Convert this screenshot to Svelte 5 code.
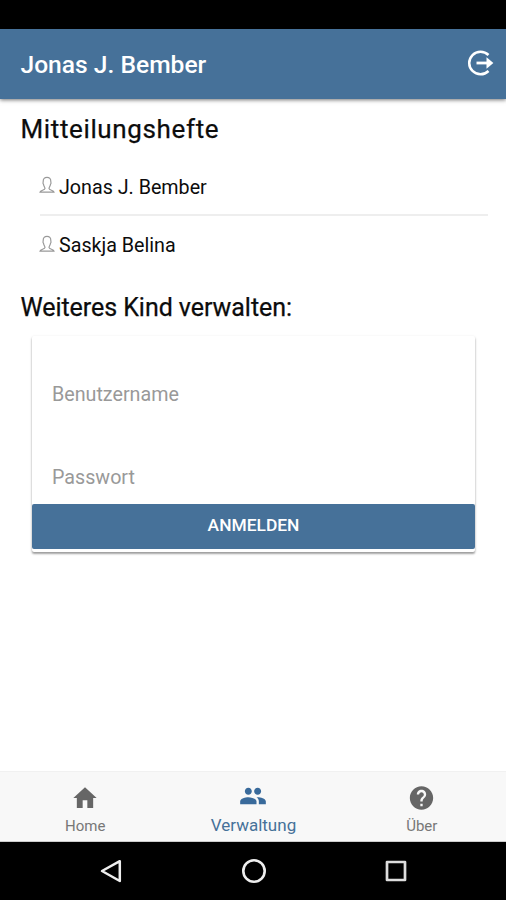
<script>
  const children = ['Jonas J. Bember', 'Saskja Belina'];
  let username = $state('');
  let password = $state('');
</script>

<div class="screen">
  <div class="status"></div>
  <header>
    <h1>Jonas J. Bember</h1>
    <button class="logout" aria-label="Abmelden">
      <svg width="28" height="28" viewBox="0 0 28 28" fill="none" stroke="#fff" stroke-width="2.5">
        <path d="M21.500 6A11.300 11.300 0 1 0 21.500 22" />
        <path d="M9.500 14H23" stroke-width="2.800" />
        <path d="M19.500 8.300L26.400 14L19.500 19.700Z" fill="#fff" stroke="none" />
      </svg>
    </button>
  </header>

  <main>
    <h2 class="books">Mitteilungshefte</h2>
    <ul>
      {#each children as name}
        <li>
          <svg width="16" height="18" viewBox="0 0 16 18" fill="none" stroke="#999" stroke-width="1.2">
            <path d="M1 16.200C1.400 14.200 5.800 14.400 6 12.500C6 11.200 4.600 10.200 4.500 8.300C3.600 7.400 4.100 6.600 4.200 5.500C4.100 2.800 5.600 1.400 8 1.400S11.900 2.800 11.800 5.500C11.900 6.600 12.400 7.400 11.500 8.300C11.400 10.200 10 11.200 10 12.500C10.200 14.400 14.600 14.200 15 16.200Z" />
          </svg>
          <span>{name}</span>
        </li>
      {/each}
    </ul>
    <h2 class="add">Weiteres Kind verwalten:</h2>
    <form onsubmit={(e) => e.preventDefault()}>
      <input type="text" placeholder="Benutzername" bind:value={username} />
      <input type="password" placeholder="Passwort" bind:value={password} />
      <button class="login"><span>ANMELDEN</span></button>
    </form>
  </main>

  <nav class="tabs">
    <a href="#home">
      <svg width="28" height="28" viewBox="0 0 24 24" fill="#666"><path d="M10 20.500v-6.500h4v6.500h5V12h3L12 2.700 2 12h3v8.500z" /></svg>
      <span>Home</span>
    </a>
    <a href="#verwaltung" class="active">
      <svg width="28" height="28" viewBox="0 0 24 24" fill="#396a9b"><path d="M16 11c1.660 0 2.990-1.340 2.990-3S17.660 5 16 5s-3 1.340-3 3 1.340 3 3 3zm-8 0c1.660 0 2.990-1.340 2.990-3S9.660 5 8 5 5 6.340 5 8s1.340 3 3 3zm0 2c-2.330 0-7 1.170-7 3.500V19h14v-2.500C15 14.170 10.330 13 8 13zm8 0c-.29 0-.62.02-.97.05C16.190 13.890 17 15.020 17 16.500V19h6v-2.500c0-2.330-4.670-3.500-7-3.500z" /></svg>
      <span>Verwaltung</span>
    </a>
    <a href="#ueber">
      <svg width="29" height="29" viewBox="0 0 24 24" fill="#666"><path d="M12 2C6.480 2 2 6.480 2 12s4.480 10 10 10 10-4.480 10-10S17.520 2 12 2zm1 17h-2v-2h2v2zm2.070-7.750l-.9.920C13.450 12.900 13 13.500 13 15h-2v-.5c0-1.100.45-2.100 1.170-2.830l1.240-1.260c.37-.36.590-.86.590-1.410 0-1.100-.9-2-2-2s-2 .9-2 2H8c0-2.210 1.790-4 4-4s4 1.790 4 4c0 .88-.36 1.680-.93 2.250z" /></svg>
      <span>Über</span>
    </a>
  </nav>

  <div class="system">
    <svg width="24" height="28" viewBox="0 0 24 28" fill="none" stroke="#eee" stroke-width="2.5" stroke-linejoin="round"><path d="M3 14L20.800 4.200V24Z" /></svg>
    <svg width="28" height="28" viewBox="0 0 28 28" fill="none" stroke="#eee" stroke-width="2.6"><circle cx="14" cy="14" r="10.700" /></svg>
    <svg width="24" height="28" viewBox="0 0 24 28" fill="none" stroke="#ddd" stroke-width="2.700" stroke-linejoin="round"><rect x="3" y="5" width="18" height="18" /></svg>
  </div>
</div>

<style>
  :global(body) { margin: 0; background: #fff; }
  .screen {
    width: 506px;
    height: 900px;
    display: flex;
    flex-direction: column;
    overflow: hidden;
    background: #fff;
    color: #0c0c0c;
    font-family: Roboto, sans-serif;
  }
  .screen * { box-sizing: border-box; }
  .status { height: 29px; background: #000; flex: none; }
  header {
    height: 70px;
    flex: none;
    display: flex;
    align-items: center;
    justify-content: space-between;
    padding: 0 11.500px 0 20.500px;
    background: #467199;
    box-shadow: 0 1px 4px rgba(0, 0, 0, .55);
  }
  h1, h2 { margin: 0; white-space: nowrap; }
  h1 { font-size: 24.6px; font-weight: 500; line-height: 30px; padding-top: 2px; color: #fff; }
  button { border: 0; padding: 0; font-family: inherit; }
  .logout { width: 28px; height: 28px; background: none; margin-top: -3px; }
  svg { display: block; flex: none; }
  main { flex: 1; padding: 14px 0 0; }
  h2 { font-size: 25px; font-weight: 400; line-height: 32px; padding-left: 20.500px; -webkit-text-stroke: .25px #0c0c0c; }
  .books { font-size: 26px; letter-spacing: .63px; }
  .add { margin-top: 18px; letter-spacing: -.05px; }
  ul { list-style: none; margin: 13px 18px 0 40px; padding: 0; }
  li { height: 58px; display: flex; align-items: center; gap: 4px; font-size: 19.7px; padding-top: 1px; }
  li svg { margin: -4px 0 0 -1px; }
  li:first-child { border-bottom: 2px solid #eee; padding-top: 2px; }
  form {
    margin: 12px 31px 0 32px;
    height: 216px;
    padding-top: 33px;
    padding-bottom: 3px;
    display: flex;
    flex-direction: column;
    border-radius: 2px;
    box-shadow: 0 2px 2px rgba(0, 0, 0, .3), 0 1px 3px rgba(0, 0, 0, .16);
  }
  input {
    height: 50px;
    margin: 0 20px 33px;
    padding: 0;
    border: 0;
    outline: 0;
    background: none;
    font: 19.7px Roboto, sans-serif;
  }
  input + input { margin-bottom: 2px; }
  input::placeholder { color: #999; opacity: 1; }
  .login {
    flex: 1;
    padding-bottom: 4px;
    background: #467199;
    color: #fff;
    border-radius: 2px;
    font-size: 17.4px;
    font-weight: 500;
  }
  .tabs {
    height: 71px;
    flex: none;
    display: flex;
    padding-left: 1px;
    background: #f8f8f8;
    border-top: 1px solid #f1f1f1;
    border-bottom: 1px solid #ccc;
  }
  .tabs a {
    flex: 1;
    display: flex;
    flex-direction: column;
    align-items: center;
    padding-top: 12px;
    color: #777;
    font-size: 15px;
    line-height: 20px;
    text-decoration: none;
  }
  .tabs a svg { height: 28px; }
  .tabs a span { margin-top: 4px; }
  .tabs .active { color: #467199; font-size: 17px; padding-top: 10px; }
  .tabs .active span { margin-top: 5px; }
  .system {
    height: 58px;
    flex: none;
    display: flex;
    align-items: center;
    justify-content: space-between;
    padding: 0 98px 0 99px;
    background: #000;
  }
</style>
